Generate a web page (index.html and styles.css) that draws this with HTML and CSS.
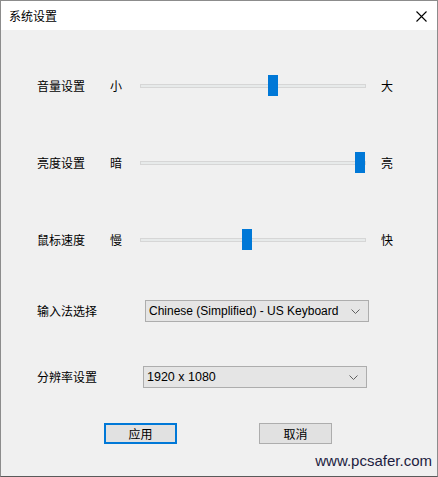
FILE: index.html
```html
<!DOCTYPE html>
<html lang="zh-CN">
<head>
<meta charset="utf-8">
<title>系统设置</title>
<link rel="stylesheet" href="styles.css">
</head>
<body>
<div class="window">
  <div class="titlebar">
    <span class="title">系统设置</span>
    <svg class="close" width="11" height="11" viewBox="0 0 11 11"><path d="M0.5 0.5 L10.5 10.5 M10.5 0.5 L0.5 10.5" stroke="#000" stroke-width="1.1" fill="none"/></svg>
  </div>
  <div class="content">
    <div class="slider-row first">
      <span class="label">音量设置</span>
      <span class="end">小</span>
      <div class="track"><div class="thumb" style="left:127px"></div></div>
      <span class="end right">大</span>
    </div>
    <div class="slider-row">
      <span class="label">亮度设置</span>
      <span class="end">暗</span>
      <div class="track"><div class="thumb" style="left:214px"></div></div>
      <span class="end right">亮</span>
    </div>
    <div class="slider-row">
      <span class="label">鼠标速度</span>
      <span class="end">慢</span>
      <div class="track"><div class="thumb" style="left:101px"></div></div>
      <span class="end right">快</span>
    </div>
    <div class="combo-row ime">
      <span class="label wide">输入法选择</span>
      <div class="combo ime-combo">
        <span class="combo-text">Chinese (Simplified) - US Keyboard</span>
        <svg class="chev" width="9" height="5" viewBox="0 0 9 5"><path d="M0.5 0.5 L4.5 4.5 L8.5 0.5" stroke="#606060" stroke-width="1" fill="none"/></svg>
      </div>
    </div>
    <div class="combo-row res">
      <span class="label wide2">分辨率设置</span>
      <div class="combo res-combo">
        <span class="combo-text">1920 x 1080</span>
        <svg class="chev" width="9" height="5" viewBox="0 0 9 5"><path d="M0.5 0.5 L4.5 4.5 L8.5 0.5" stroke="#606060" stroke-width="1" fill="none"/></svg>
      </div>
    </div>
    <div class="buttons">
      <button class="btn primary">应用</button>
      <button class="btn">取消</button>
    </div>
  </div>
  <div class="watermark">www.pcsafer.com</div>
</div>
</body>
</html>
```

FILE: styles.css
```css
html, body {
  margin: 0;
  padding: 0;
  background: #f0f0f0;
}
.window {
  position: relative;
  width: 438px;
  height: 477px;
  box-sizing: border-box;
  border: 1px solid #8c8c8c;
  border-bottom-color: #5a5a5a;
  display: flex;
  flex-direction: column;
  font-family: "Noto Sans CJK SC", "Liberation Sans", sans-serif;
  font-size: 12px;
  color: #000;
}
.titlebar {
  height: 29px;
  background: #fff;
  display: flex;
  align-items: center;
  justify-content: space-between;
  padding: 0 10px 0 8px;
  flex-shrink: 0;
}
.title {
  font-size: 12px;
  line-height: 14px;
}
.close {
  display: block;
  margin-top: 1px;
}
.content {
  flex: 1;
  background: #f0f0f0;
  display: flex;
  flex-direction: column;
  padding-left: 36px;
}
.slider-row {
  display: flex;
  align-items: center;
  height: 22px;
  margin-top: 55px;
}
.slider-row.first {
  margin-top: 45px;
}
.label {
  width: 73px;
  line-height: 14px;
  white-space: nowrap;
}
.end {
  width: 30px;
  line-height: 14px;
}
.end.right {
  width: auto;
  margin-left: 15px;
}
.track {
  position: relative;
  width: 226px;
  height: 4px;
  box-sizing: border-box;
  background: #e7eaea;
  border: 1px solid #d6d6d6;
}
.thumb {
  position: absolute;
  top: -10px;
  width: 10px;
  height: 21px;
  background: #0078d7;
}
.combo-row {
  display: flex;
  align-items: center;
  height: 22px;
}
.combo-row.ime {
  margin-top: 49px;
}
.combo-row.res {
  margin-top: 44px;
}
.label.wide {
  width: 108px;
}
.label.wide2 {
  width: 106px;
}
.combo {
  width: 224px;
  height: 22px;
  box-sizing: border-box;
  border: 1px solid #adadad;
  background: #e5e5e5;
  display: flex;
  align-items: center;
  justify-content: space-between;
  padding: 0 8px 0 3px;
  font-family: "Liberation Sans", sans-serif;
  font-size: 12px;
  color: #000;
}
.combo-text {
  line-height: 14px;
  white-space: nowrap;
}
.res-combo .combo-text {
  font-size: 12.5px;
}
.buttons {
  display: flex;
  gap: 82px;
  margin-top: 35px;
  margin-left: 67px;
}
.btn {
  width: 73px;
  height: 21px;
  box-sizing: border-box;
  margin: 0;
  padding: 0;
  background: #e1e1e1;
  border: 1px solid #adadad;
  font-family: "Noto Sans CJK SC", sans-serif;
  font-size: 12px;
  line-height: 14px;
  color: #000;
}
.btn.primary {
  border: 2px solid #0078d7;
}
.watermark {
  position: absolute;
  right: 5px;
  bottom: 7px;
  font-family: "Liberation Sans", sans-serif;
  font-size: 15px;
  line-height: 17px;
  color: #1c1c40;
}
```
